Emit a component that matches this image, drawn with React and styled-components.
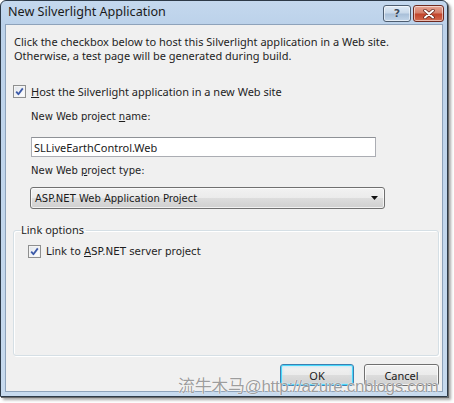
import React from 'react';
import styled, { createGlobalStyle, css } from 'styled-components';

const GlobalStyle = createGlobalStyle`
  html, body {
    margin: 0;
    padding: 0;
    background: #ffffff;
  }
  body {
    font-family: "Noto Sans", "Liberation Sans", sans-serif;
  }
`;

const Page = styled.div`
  position: relative;
  width: 454px;
  height: 403px;
  overflow: hidden;
`;

const Window = styled.div`
  width: 446px;
  height: 395px;
  border: 1px solid #2d3a48;
  border-radius: 6px 6px 0 0;
  background: linear-gradient(to bottom, #c4d8ee 0%, #bcd2ea 6%, #c7daee 100%);
  box-shadow: 1px 1px 0 #6a6a6a, 3px 3px 3px rgba(0, 0, 0, 0.35);
  display: flex;
  flex-direction: column;
`;

const TitleBar = styled.div`
  height: 23px;
  display: flex;
  align-items: flex-start;
  padding: 0 3px 0 7px;
`;

const Title = styled.div`
  flex: 1;
  font-size: 12.6px;
  line-height: 13px;
  padding-top: 4px;
  color: #1a1a1a;
`;

const CaptionButton = styled.div`
  margin-top: 4px;
  height: 15px;
  border: 1px solid #4d5d70;
  border-radius: 3px;
  display: flex;
  align-items: center;
  justify-content: center;
  box-shadow: inset 0 0 0 1px rgba(255, 255, 255, 0.55);
  ${(p) =>
    p.$close
      ? css`
          width: 29px;
          margin-left: 2px;
          background: linear-gradient(to bottom, #e6a596 0%, #d5806b 45%, #c2452c 55%, #d36a4f 100%);
          border-color: #6e2a20;
        `
      : css`
          width: 26px;
          background: linear-gradient(to bottom, #e0ebf6 0%, #c9d9ea 45%, #a9c0d9 55%, #c3d6ea 100%);
        `}
`;

const HelpGlyph = styled.span`
  font-family: "DejaVu Sans", sans-serif;
  font-weight: bold;
  font-size: 11px;
  line-height: 11px;
  color: #3a4a5e;
  text-shadow: 0 0 1px #ffffff;
`;

const Client = styled.div`
  flex: 1;
  margin: 0 4px 4px 4px;
  border: 1px solid #8ea3bb;
  background: #f0f0f0;
  display: flex;
  flex-direction: column;
`;

const Intro = styled.div`
  padding: 10px 0 0 8px;
  font-size: 11px;
  line-height: 14px;
  color: #1e1e1e;
`;

const CheckRow = styled.label`
  display: flex;
  align-items: center;
  gap: 5px;
  height: 14px;
  margin: ${(p) => p.$margin};
  font-size: ${(p) => (p.$tahoma ? '10.3px' : '11px')};
  font-family: ${(p) => (p.$tahoma ? '"DejaVu Sans", sans-serif' : 'inherit')};
  color: #1e1e1e;
`;

const Box = styled.span`
  width: 11px;
  height: 11px;
  border: 1px solid #8e8f8f;
  background: linear-gradient(135deg, #dfe4ea 0%, #f7f8fa 70%, #ffffff 100%);
  display: flex;
  align-items: center;
  justify-content: center;
  box-shadow: inset 0 0 0 1px #f4f4f4;
`;

const Key = styled.span`
  text-decoration: underline;
`;

const Fields = styled.div`
  padding-left: 25px;
  display: flex;
  flex-direction: column;
`;

const FieldLabel = styled.div`
  font-family: "DejaVu Sans", sans-serif;
  font-size: 10px;
  line-height: 14px;
  color: #1e1e1e;
  margin-top: ${(p) => p.$top}px;
`;

const TextBox = styled.div`
  margin-top: 13px;
  width: 341px;
  height: 18px;
  border: 1px solid #abadb3;
  border-top-color: #8e9196;
  background: #ffffff;
  display: flex;
  align-items: center;
  padding-left: 2px;
  font-size: 11px;
  color: #1a1a1a;
`;

const Select = styled.div`
  margin: 9px 0 0 -1px;
  width: 343px;
  height: 20px;
  border: 1px solid #707070;
  border-radius: 3px;
  background: linear-gradient(to bottom, #f2f2f2 0%, #ebebeb 50%, #dddddd 50%, #cfcfcf 100%);
  box-shadow: inset 0 0 0 1px rgba(255, 255, 255, 0.7);
  display: flex;
  align-items: center;
  padding: 0 6px 0 4px;
  box-sizing: content-box;
  font-family: "DejaVu Sans", sans-serif;
  font-size: 10px;
  color: #1a1a1a;
`;

const SelectText = styled.span`
  flex: 1;
`;

const Group = styled.fieldset`
  margin: 14px 3px 0 7px;
  padding: 7px 0 0 14px;
  height: 133px;
  box-sizing: border-box;
  border: 1px solid #d5dfe5;
  border-radius: 3px;
  box-shadow: inset 1px 1px 0 #ffffff, 1px 1px 0 #ffffff;
`;

const Legend = styled.legend`
  padding: 0 2px 0 0;
  margin-left: -7px;
  font-size: 11px;
  line-height: 14px;
  color: #1e1e1e;
`;

const Buttons = styled.div`
  display: flex;
  justify-content: flex-end;
  gap: 10px;
  margin: 8px 3px 0 0;
`;

const Button = styled.div`
  width: ${(p) => p.$w}px;
  height: 20px;
  border: 1px solid ${(p) => (p.$default ? '#3c7fb1' : '#707070')};
  border-radius: 3px;
  background: linear-gradient(to bottom, #f2f2f2 0%, #ebebeb 50%, #dddddd 50%, #cfcfcf 100%);
  box-shadow: ${(p) =>
    p.$default
      ? 'inset 0 0 0 1px #48d8fb, inset 0 0 2px 2px rgba(180, 230, 250, 0.6)'
      : 'inset 0 0 0 1px rgba(255, 255, 255, 0.75)'};
  display: flex;
  align-items: center;
  justify-content: center;
  font-size: 11px;
  color: #1a1a1a;
`;

const Watermark = styled.div`
  position: absolute;
  left: 178px;
  top: 377px;
  font-family: "Liberation Sans", "Noto Sans CJK SC", sans-serif;
  font-size: 17px;
  line-height: 20px;
  letter-spacing: -0.35px;
  color: rgba(140, 140, 140, 0.85);
  text-shadow: 0 0 1px #ffffff, 0 0 1px #ffffff;
  white-space: nowrap;
`;

const Check = () => (
  <svg width="9" height="9" viewBox="0 0 9 9">
    <path d="M1.2 4.6 L3.4 7.2 L7.8 1.4" fill="none" stroke="#3c5aa8" strokeWidth="1.8" strokeLinejoin="round" />
  </svg>
);

const CheckBox = () => (
  <Box>
    <Check />
  </Box>
);

const CloseGlyph = () => (
  <svg width="12" height="10" viewBox="0 0 12 10">
    <path d="M2 1.5 L10 8.5 M10 1.5 L2 8.5" stroke="#5a1d14" strokeWidth="3.4" strokeLinecap="round" />
    <path d="M2 1.5 L10 8.5 M10 1.5 L2 8.5" stroke="#ffffff" strokeWidth="2" strokeLinecap="round" />
  </svg>
);

const Arrow = () => (
  <svg width="7" height="4" viewBox="0 0 7 4">
    <path d="M0 0 H7 L3.5 4 Z" fill="#111111" />
  </svg>
);

export default function App() {
  return (
    <Page>
      <GlobalStyle />
      <Window>
        <TitleBar>
          <Title>New Silverlight Application</Title>
          <CaptionButton>
            <HelpGlyph>?</HelpGlyph>
          </CaptionButton>
          <CaptionButton $close>
            <CloseGlyph />
          </CaptionButton>
        </TitleBar>
        <Client>
          <Intro>
            Click the checkbox below to host this Silverlight application in a Web site.
            <br />
            Otherwise, a test page will be generated during build.
          </Intro>
          <CheckRow $margin="21px 0 0 7px">
            <CheckBox />
            <span>
              <Key>H</Key>ost the Silverlight application in a new Web site
            </span>
          </CheckRow>
          <Fields>
            <FieldLabel $top={12}>
              New Web project <Key>n</Key>ame:
            </FieldLabel>
            <TextBox>SLLiveEarthControl.Web</TextBox>
            <FieldLabel $top={7}>
              New Web <Key>p</Key>roject type:
            </FieldLabel>
            <Select>
              <SelectText>ASP.NET Web Application Project</SelectText>
              <Arrow />
            </Select>
          </Fields>
          <Group>
            <Legend>Link options</Legend>
            <CheckRow $tahoma $margin="0">
              <CheckBox />
              <span>
                Link to <Key>A</Key>SP.NET server project
              </span>
            </CheckRow>
          </Group>
          <Buttons>
            <Button $default $w={72}>OK</Button>
            <Button $w={73}>Cancel</Button>
          </Buttons>
        </Client>
      </Window>
      <Watermark>流牛木马@http://azure.cnblogs.com</Watermark>
    </Page>
  );
}
